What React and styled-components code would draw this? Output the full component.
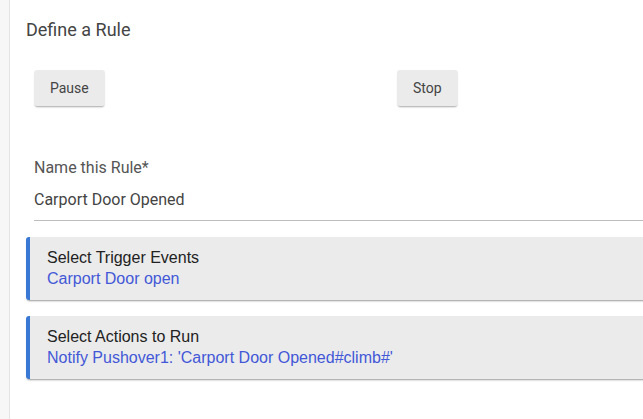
import React from 'react'
import styled, { createGlobalStyle } from 'styled-components'

const GlobalStyle = createGlobalStyle`
    body {
        margin: 0;
        background: #ffffff;
        overflow: hidden;
        font-family: Roboto, "Liberation Sans", Arial, sans-serif;
    }
`

function App() {
    return (
        <Page>
            <GlobalStyle />
            <SideStrip />
            <Main>
                <Title>Define a Rule</Title>
                <ButtonRow>
                    <Button>Pause</Button>
                    <Button>Stop</Button>
                </ButtonRow>
                <Field>
                    <FieldLabel>Name this Rule*</FieldLabel>
                    <FieldValue>Carport Door Opened</FieldValue>
                </Field>
                <Card>
                    <CardTitle>Select Trigger Events</CardTitle>
                    <CardValue>Carport Door open</CardValue>
                </Card>
                <Card>
                    <CardTitle>Select Actions to Run</CardTitle>
                    <CardValue>Notify Pushover1: 'Carport Door Opened#climb#'</CardValue>
                </Card>
            </Main>
        </Page>
    )
}

export default App

const Page = styled.div`
    display: flex;
    height: 419px;
    width: 643px;
    overflow: hidden;
`
const SideStrip = styled.div`
    flex: 0 0 9px;
    background: #f7f7f7;
    border-right: 1px solid #e4e4e4;
`
const Main = styled.div`
    flex: 0 0 auto;
    width: 720px;
    padding: 19px 0 0 16px;
    display: flex;
    flex-direction: column;
`
const Title = styled.div`
    font-size: 18px;
    line-height: 22px;
    color: #444;
`
const ButtonRow = styled.div`
    display: grid;
    grid-template-columns: 363px auto;
    justify-items: start;
    margin: 29px 0 0 8px;
`
const Button = styled.button`
    height: 36px;
    padding: 0 16px;
    border: none;
    border-radius: 3px;
    background: #ebebeb;
    color: #444;
    font-family: Roboto, sans-serif;
    font-size: 14px;
    box-shadow: 0 2px 2px -1px rgba(0, 0, 0, 0.35);
`
const Field = styled.div`
    margin: 52px 0 0 8px;
    border-bottom: 1px solid #bdbdbd;
    padding-bottom: 10px;
`
const FieldLabel = styled.div`
    font-size: 16px;
    line-height: 20px;
    color: #555;
`
const FieldValue = styled.div`
    margin-top: 12px;
    font-size: 16px;
    line-height: 20px;
    color: #444;
`
const Card = styled.div`
    margin-top: 16px;
    padding: 10px 0 11px 17px;
    background: #ebebeb;
    border-left: 4px solid #3a78d5;
    border-radius: 3px 0 0 3px;
    box-shadow: 0 2px 2px -1px rgba(0, 0, 0, 0.4);
    font-family: "Liberation Sans", Arial, sans-serif;
    font-size: 16px;
    line-height: 21px;
`
const CardTitle = styled.div`
    color: #222;
`
const CardValue = styled.div`
    color: #4258d8;
`
